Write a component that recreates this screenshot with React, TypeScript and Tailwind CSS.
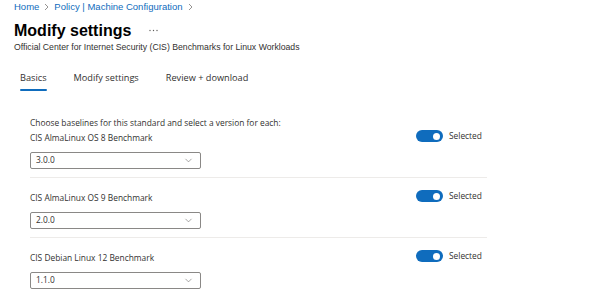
import { ChevronDown } from "lucide-react";

const head = "font-['Liberation_Sans',Arial,sans-serif]";
const body = "font-['Open_Sans','Noto_Sans',sans-serif]";

function Crumb() {
  return (
    <svg width="5" height="8" viewBox="0 0 5 8" className="shrink-0">
      <polyline points="1,1 4,4 1,7" fill="none" stroke="#8a8886" strokeWidth="0.9" />
    </svg>
  );
}

function Toggle() {
  return (
    <div className="mt-[1px] h-[12px] flex items-center gap-[6px]">
      <div className="w-[27px] h-[12px] rounded-full bg-[#0f6cbd] flex items-center justify-end pr-[3px]">
        <div className="w-[7px] h-[7px] rounded-full bg-white" />
      </div>
      <span className={`${body} text-[8.4px] leading-[12px] text-[#323130]`}>Selected</span>
    </div>
  );
}

function Baseline({ label, version, last }: { label: string; version: string; last?: boolean }) {
  return (
    <div className={last ? "" : "border-b border-[#edebe9] pb-[8px]"}>
      <div className="flex items-start">
        <div className="w-[386px] pt-[2px]">
          <div className={`${body} text-[8.4px] leading-[14px] text-[#323130]`}>{label}</div>
          <div className="mt-[7px] w-[171px] h-[17px] border border-[#8a8886] rounded-[2px] flex items-center justify-between pl-[5px] pr-[6px]">
            <span className={`${body} text-[8.4px] text-[#323130]`}>{version}</span>
            <ChevronDown size={11} strokeWidth={1.2} className="text-[#605e5c]" />
          </div>
        </div>
        <Toggle />
      </div>
    </div>
  );
}

export default function App() {
  return (
    <div className="w-[592px] h-[292px] bg-white overflow-hidden">
      <div className="px-[14px]">
        <div className={`${head} h-[14px] flex items-center gap-[5px] text-[9.5px] text-[#0f6cbd]`}>
          <span>Home</span>
          <Crumb />
          <span>Policy | Machine Configuration</span>
          <Crumb />
        </div>
        <div className="mt-[6px] h-[22px] flex items-center">
          <h1 className={`${head} text-[16px] leading-[22px] font-bold text-black`}>Modify settings</h1>
          <svg width="9" height="3" viewBox="0 0 9 3" className="ml-[18px] mt-[-2px]">
            <circle cx="1" cy="1.5" r="0.7" fill="#605e5c" />
            <circle cx="4.5" cy="1.5" r="0.7" fill="#605e5c" />
            <circle cx="8" cy="1.5" r="0.7" fill="#605e5c" />
          </svg>
        </div>
        <p className={`${head} text-[8.7px] leading-[10px] text-[#323130]`}>
          Official Center for Internet Security (CIS) Benchmarks for Linux Workloads
        </p>
      </div>

      <div className={`${body} mt-[18px] pl-[20px] flex gap-[27px] text-[9.2px] text-[#323130]`}>
        <div className="flex flex-col">
          <span className="h-[16px] leading-[16px]">Basics</span>
          <span className="mt-[3px] h-[2px] bg-[#0f6cbd] rounded-full" />
        </div>
        <span className="h-[16px] leading-[16px]">Modify settings</span>
        <span className="h-[16px] leading-[16px]">Review + download</span>
      </div>

      <div className="mt-[25px] ml-[30px] w-[457px]">
        <div className={`${body} h-[13px] leading-[13px] text-[8.4px] text-[#323130]`}>
          Choose baselines for this standard and select a version for each:
        </div>
        <Baseline label="CIS AlmaLinux OS 8 Benchmark" version="3.0.0" />
        <div className="pt-[11px]">
          <Baseline label="CIS AlmaLinux OS 9 Benchmark" version="2.0.0" />
        </div>
        <div className="pt-[11px]">
          <Baseline label="CIS Debian Linux 12 Benchmark" version="1.1.0" last />
        </div>
      </div>
    </div>
  );
}
